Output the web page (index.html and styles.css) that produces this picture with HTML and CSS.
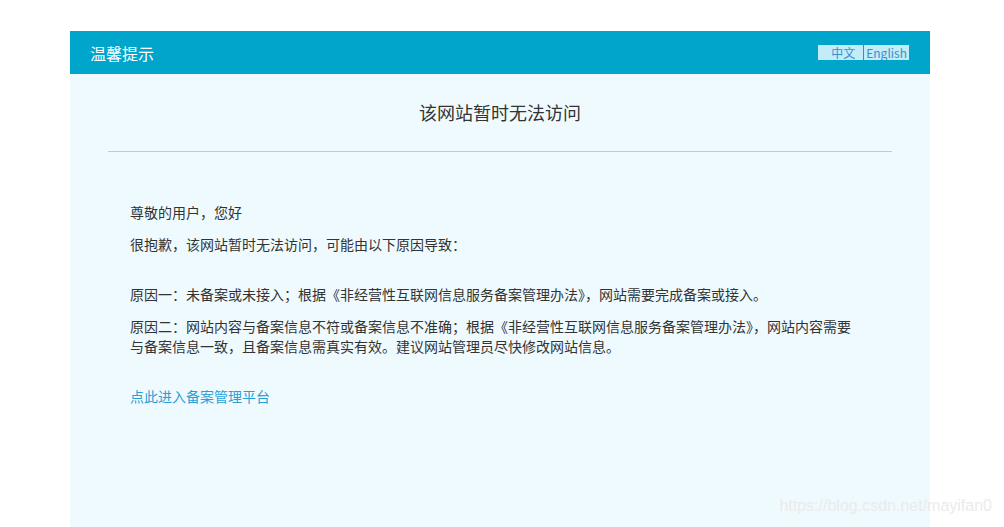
FILE: index.html
```html
<!DOCTYPE html>
<html lang="zh-CN">
<head>
  <meta charset="UTF-8">
  <title>温馨提示</title>
  <link rel="stylesheet" href="styles.css">
</head>
<body>
  <div class="notice">
    <div class="notice-header">
      <span class="notice-title">温馨提示</span>
      <div class="lang-switch">
        <a class="lang-btn lang-zh" href="#">中文</a>
        <a class="lang-btn" href="#">English</a>
      </div>
    </div>
    <div class="notice-body">
      <h1>该网站暂时无法访问</h1>
      <div class="content">
        <p>尊敬的用户，您好</p>
        <p>很抱歉，该网站暂时无法访问，可能由以下原因导致：</p>
        <p class="gap">原因一：未备案或未接入；根据《非经营性互联网信息服务备案管理办法》，网站需要完成备案或接入。</p>
        <p>原因二：网站内容与备案信息不符或备案信息不准确；根据《非经营性互联网信息服务备案管理办法》，网站内容需要与备案信息一致，且备案信息需真实有效。建议网站管理员尽快修改网站信息。</p>
        <a class="link" href="#">点此进入备案管理平台</a>
      </div>
    </div>
  </div>
  <div class="watermark">https://blog.csdn.net/mayifan0</div>
</body>
</html>
```

FILE: styles.css
```css
:root {
  --primary-color: #00a5cc;
  --body-bg: #effafe;
  --text-color: #333;
  --link-color: #2a9fd6;
}

body {
  margin: 0;
  padding: 31px 0 0;
  background-color: #fff;
  font-family: "Noto Sans CJK SC", "Liberation Sans", sans-serif;
  color: var(--text-color);
}

.notice {
  width: 860px;
  margin-left: 70px;
  background-color: var(--body-bg);
  min-height: 496px;
}

.notice-header {
  height: 43px;
  background-color: var(--primary-color);
  display: flex;
  align-items: center;
  justify-content: space-between;
  padding: 0 21px 0 20px;
}

.notice-title {
  color: #fff;
  font-size: 16px;
}

.lang-switch {
  display: flex;
  gap: 1px;
}

.lang-btn {
  display: block;
  height: 15px;
  line-height: 15px;
  padding: 0 2px;
  font-size: 12px;
  background-color: #c2ecf8;
  color: #3a8fcc;
  text-decoration: none;
}

.lang-zh {
  width: 45px;
  box-sizing: border-box;
  padding: 0 8px 0 0;
  text-align: right;
}

.notice-body h1 {
  margin: 0 38px;
  padding: 24px 0 25px;
  border-bottom: 1px solid #9ed8ee;
  text-align: center;
  font-size: 18px;
  font-weight: normal;
  line-height: 28px;
}

.content {
  padding: 50px 75px 0 60px;
  font-size: 14px;
  line-height: 20px;
}

.content p {
  margin: 0 0 12px;
}

.content .gap {
  margin-top: 30px;
}

.link {
  display: inline-block;
  margin-top: 18px;
  color: var(--link-color);
  text-decoration: none;
}

.watermark {
  position: absolute;
  right: 12px;
  top: 497px;
  font-family: "Liberation Sans", sans-serif;
  font-size: 16px;
  color: #ebebeb;
}
```
